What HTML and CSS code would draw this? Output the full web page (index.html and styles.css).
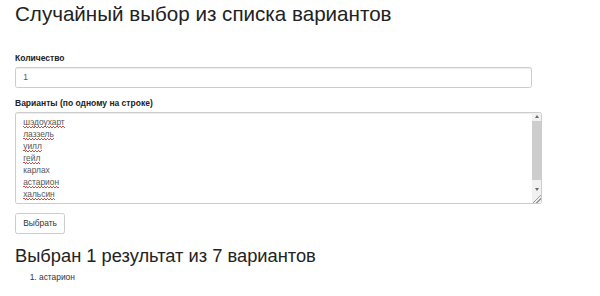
FILE: index.html
```html
<!DOCTYPE html>
<html lang="ru">
<head>
<meta charset="utf-8">
<title>Случайный выбор из списка вариантов</title>
<link rel="stylesheet" href="styles.css">
</head>
<body>
<div class="container">
  <h1 class="title">Случайный выбор из списка вариантов</h1>
  <form class="picker">
    <div class="form-group">
      <label class="label" for="count">Количество</label>
      <input class="input" id="count" type="text" value="1">
    </div>
    <div class="form-group">
      <label class="label">Варианты (по одному на строке)</label>
      <div class="textarea" role="textbox" aria-multiline="true">
        <div class="lines">
          <div class="line"><span class="miss">шэдоухарт</span></div>
          <div class="line"><span class="miss">лаззель</span></div>
          <div class="line"><span class="miss">уилл</span></div>
          <div class="line"><span class="miss">гейл</span></div>
          <div class="line">карлах</div>
          <div class="line"><span class="miss">астарион</span></div>
          <div class="line"><span class="miss">хальсин</span></div>
        </div>
        <div class="scrollbar" aria-hidden="true">
          <div class="sb-btn"><span class="arrow-up"></span></div>
          <div class="sb-track"><div class="sb-thumb"></div></div>
          <div class="sb-btn"><span class="arrow-down"></span></div>
          <div class="sb-corner"></div>
        </div>
      </div>
    </div>
    <button class="btn" type="button">Выбрать</button>
  </form>
  <h2 class="result-title">Выбран 1 результат из 7 вариантов</h2>
  <ol class="result-list">
    <li>астарион</li>
  </ol>
</div>
</body>
</html>
```

FILE: styles.css
```css
html, body {
  margin: 0;
  padding: 0;
  background: #fff;
}
body {
  font-family: "Liberation Sans", Arial, Helvetica, sans-serif;
  font-size: 8.4px;
  line-height: 12px;
  color: #333;
}
.container {
  padding: 2px 15px 0 15px;
}
.title {
  margin: 0 0 25.8px 0;
  font-size: 20.6px;
  line-height: 23.76px;
  font-weight: 500;
  color: #222;
}
.picker {
  margin: 0;
}
.form-group {
  margin-bottom: 9px;
}
.label {
  display: block;
  font-weight: 700;
  font-size: 8.5px;
  margin-bottom: 3px;
  color: #222;
}
.input {
  display: block;
  box-sizing: border-box;
  width: 517px;
  height: 21px;
  margin: 0;
  padding: 3.6px 7.2px;
  font-family: inherit;
  font-size: 8.4px;
  line-height: 12px;
  color: #555;
  background: #fff;
  border: 1px solid #ccc;
  border-radius: 2.4px;
  box-shadow: inset 0 1px 1px rgba(0,0,0,.075);
  outline: none;
}
.textarea {
  position: relative;
  box-sizing: border-box;
  width: 527px;
  height: 92px;
  padding: 3.6px 9px 3.6px 7.2px;
  color: #555;
  background: #fff;
  border: 1px solid #ccc;
  border-radius: 2.4px;
  box-shadow: inset 0 1px 1px rgba(0,0,0,.075);
  overflow: hidden;
}
.line {
  height: 12px;
  white-space: pre;
}
.miss {
  padding-bottom: 1px;
  background-image:
    repeating-linear-gradient(90deg, #e24a3f 0 1.5px, transparent 1.5px 3px),
    repeating-linear-gradient(90deg, transparent 0 1.5px, #e24a3f 1.5px 3px);
  background-size: 100% 1px, 100% 1px;
  background-position: 0 calc(100% - 1px), 0 100%;
  background-repeat: no-repeat;
}
.scrollbar {
  position: absolute;
  top: 0;
  right: 0;
  bottom: 0;
  width: 9px;
  display: flex;
  flex-direction: column;
  background: #f1f1f1;
}
.sb-btn {
  height: 8px;
  display: flex;
  align-items: center;
  justify-content: center;
}
.arrow-up {
  width: 0;
  height: 0;
  border-left: 2.5px solid transparent;
  border-right: 2.5px solid transparent;
  border-bottom: 3px solid #6a6a6a;
}
.arrow-down {
  width: 0;
  height: 0;
  border-left: 2.5px solid transparent;
  border-right: 2.5px solid transparent;
  border-top: 3px solid #6a6a6a;
}
.sb-track {
  flex: 1;
  display: flex;
  flex-direction: column;
}
.sb-thumb {
  height: 92%;
  background: #cdcdcd;
}
.sb-corner {
  height: 9px;
  background-image: linear-gradient(135deg, transparent 52%, #999 52%, #999 60%, transparent 60%, transparent 72%, #999 72%, #999 80%, transparent 80%);
}
.btn {
  display: inline-block;
  box-sizing: border-box;
  height: 21px;
  margin: 0;
  padding: 3.6px 7.2px;
  font-family: inherit;
  font-size: 8.4px;
  line-height: 12px;
  color: #333;
  background: #fff;
  border: 1px solid #ccc;
  border-radius: 2.4px;
  cursor: pointer;
}
.result-title {
  margin: 12px 0 6px 0;
  font-size: 18.3px;
  line-height: 19.8px;
  font-weight: 500;
  color: #222;
}
.result-list {
  margin: 0 0 6px 0;
  padding-left: 24px;
}
```
